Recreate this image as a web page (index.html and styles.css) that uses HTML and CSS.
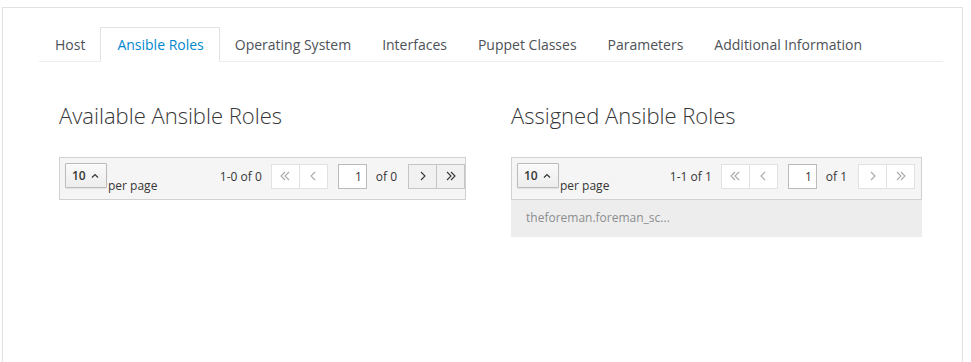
FILE: index.html
```html
<!DOCTYPE html>
<html lang="en">
<head>
    <meta charset="UTF-8">
    <title>Ansible Roles</title>
    <link rel="stylesheet" href="styles.css">
</head>
<body>
    <div class="panel">
        <ul class="tabs">
            <li class="tab">Host</li>
            <li class="tab active">Ansible Roles</li>
            <li class="tab">Operating System</li>
            <li class="tab">Interfaces</li>
            <li class="tab">Puppet Classes</li>
            <li class="tab">Parameters</li>
            <li class="tab">Additional Information</li>
        </ul>

        <div class="columns">
            <div class="column">
                <h2>Available Ansible Roles</h2>
                <div class="pager">
                    <div class="per-page">
                        <button class="dropdown">10 <svg class="caret" width="8" height="5" viewBox="0 0 8 5"><path d="M1 4.5 L4 1.5 L7 4.5" fill="none" stroke="#363636" stroke-width="1.2"/></svg></button>
                        <span class="per-label">per page</span>
                    </div>
                    <div class="nav">
                        <span class="range">1-0 of 0</span>
                        <div class="btn-group">
                            <span class="pbtn off"><svg width="10" height="10" viewBox="0 0 10 10"><path d="M5 1 L1 5 L5 9 M9 1 L5 5 L9 9" fill="none" stroke="currentColor" stroke-width="1.1"/></svg></span>
                            <span class="pbtn off"><svg width="6" height="10" viewBox="0 0 6 10"><path d="M5 1 L1 5 L5 9" fill="none" stroke="currentColor" stroke-width="1.1"/></svg></span>
                        </div>
                        <input class="page-input" value="1">
                        <span class="of">of 0</span>
                        <div class="btn-group">
                            <span class="pbtn on"><svg width="6" height="10" viewBox="0 0 6 10"><path d="M1 1 L5 5 L1 9" fill="none" stroke="currentColor" stroke-width="1.1"/></svg></span>
                            <span class="pbtn on"><svg width="10" height="10" viewBox="0 0 10 10"><path d="M1 1 L5 5 L1 9 M5 1 L9 5 L5 9" fill="none" stroke="currentColor" stroke-width="1.1"/></svg></span>
                        </div>
                    </div>
                </div>
            </div>

            <div class="column">
                <h2>Assigned Ansible Roles</h2>
                <div class="pager assigned">
                    <div class="per-page">
                        <button class="dropdown">10 <svg class="caret" width="8" height="5" viewBox="0 0 8 5"><path d="M1 4.5 L4 1.5 L7 4.5" fill="none" stroke="#363636" stroke-width="1.2"/></svg></button>
                        <span class="per-label">per page</span>
                    </div>
                    <div class="nav">
                        <span class="range">1-1 of 1</span>
                        <div class="btn-group">
                            <span class="pbtn off"><svg width="10" height="10" viewBox="0 0 10 10"><path d="M5 1 L1 5 L5 9 M9 1 L5 5 L9 9" fill="none" stroke="currentColor" stroke-width="1.1"/></svg></span>
                            <span class="pbtn off"><svg width="6" height="10" viewBox="0 0 6 10"><path d="M5 1 L1 5 L5 9" fill="none" stroke="currentColor" stroke-width="1.1"/></svg></span>
                        </div>
                        <input class="page-input" value="1">
                        <span class="of">of 1</span>
                        <div class="btn-group">
                            <span class="pbtn off"><svg width="6" height="10" viewBox="0 0 6 10"><path d="M1 1 L5 5 L1 9" fill="none" stroke="currentColor" stroke-width="1.1"/></svg></span>
                            <span class="pbtn off"><svg width="10" height="10" viewBox="0 0 10 10"><path d="M1 1 L5 5 L1 9 M5 1 L9 5 L5 9" fill="none" stroke="currentColor" stroke-width="1.1"/></svg></span>
                        </div>
                    </div>
                </div>
                <div class="role-item">theforeman.foreman_sc...</div>
            </div>
        </div>
    </div>
</body>
</html>
```

FILE: styles.css
```css
body {
    margin: 0;
    font-family: "Open Sans", sans-serif;
    color: #363636;
    background: #fff;
    overflow: hidden;
}
.panel {
    margin: 7px 8px 0 2px;
    border: 1px solid #e2e2e2;
    border-bottom: none;
    padding: 19px 19px 0 36px;
    height: 360px;
}
.tabs {
    display: flex;
    list-style: none;
    margin: 0;
    padding: 0;
    border-bottom: 1px solid #ececec;
}
.tab {
    font-size: 14px;
    line-height: 20px;
    padding: 7px 15px 6px;
    margin: 0 -1px -1px 0;
    border: 1px solid transparent;
    color: #4d5258;
}
.tab.active {
    color: #0088ce;
    border-color: #e2e2e2;
    border-bottom-color: #fff;
    background: #fff;
    padding-left: 16px;
}
.columns {
    display: grid;
    grid-template-columns: 407px 411px;
    column-gap: 45px;
    padding-left: 20px;
}
h2 {
    font-weight: 300;
    font-size: 22px;
    line-height: 30px;
    margin: 38px 0 27px;
    color: #363636;
}
.pager {
    display: flex;
    justify-content: space-between;
    align-items: flex-start;
    height: 43px;
    background: #f5f5f5;
    border: 1px solid #d1d1d1;
    padding: 5px 0 0 5px;
    box-sizing: border-box;
    font-size: 12px;
}
.pager.assigned {
    padding-right: 6px;
}
.per-page {
    display: flex;
    align-items: flex-end;
}
.dropdown {
    display: flex;
    align-items: center;
    font-family: "Open Sans", sans-serif;
    font-size: 12px;
    font-weight: 600;
    color: #363636;
    background: linear-gradient(#fafafa, #ededed);
    border: 1px solid #bbb;
    border-radius: 1px;
    box-shadow: 0 1px 1px rgba(3, 3, 3, 0.08);
    height: 25px;
    width: 42px;
    padding: 0 0 0 6px;
}
.caret {
    margin-left: 5px;
    margin-top: -1px;
}
.per-label {
    margin-left: 1px;
    line-height: 16px;
    position: relative;
    top: 6px;
}
.nav {
    display: flex;
    align-items: center;
    height: 26px;
}
.range {
    margin-right: 9px;
}
.btn-group {
    display: flex;
}
.pbtn {
    display: flex;
    align-items: center;
    justify-content: center;
    box-sizing: border-box;
    width: 29px;
    height: 25px;
    background: #fff;
    border: 1px solid #e2e2e2;
    color: #a9a9a9;
}
.pbtn + .pbtn {
    margin-left: -1px;
}
.pbtn.on {
    background: #f1f1f1;
    border-color: #c5c5c5;
    color: #363636;
}
.page-input {
    font-family: "Open Sans", sans-serif;
    font-size: 12px;
    color: #363636;
    width: 29px;
    height: 25px;
    box-sizing: border-box;
    border: 1px solid #bbb;
    text-align: right;
    padding: 0 4px;
    margin-left: 10px;
}
.of {
    margin: 0 11px 0 9px;
}
.role-item {
    background: #ededed;
    color: #8b8d8f;
    font-size: 12px;
    padding: 10px 15px 11px;
    line-height: 16px;
}
```
